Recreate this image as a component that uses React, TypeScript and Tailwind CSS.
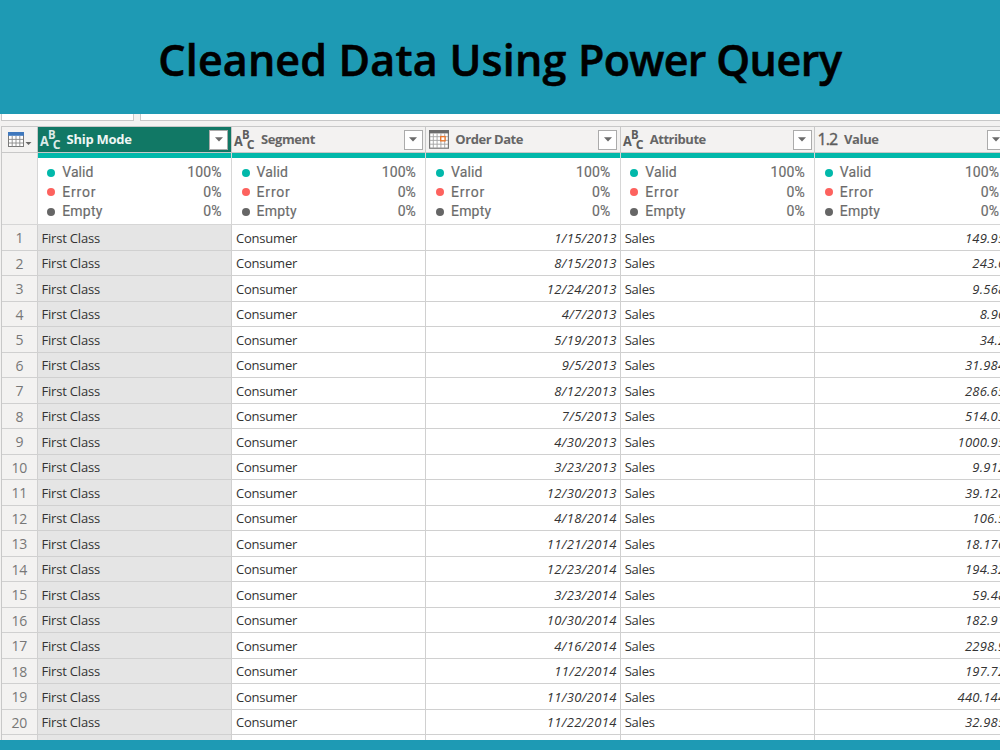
import React from 'react';

const dates = ['1/15/2013', '8/15/2013', '12/24/2013', '4/7/2013', '5/19/2013', '9/5/2013', '8/12/2013', '7/5/2013', '4/30/2013', '3/23/2013', '12/30/2013', '4/18/2014', '11/21/2014', '12/23/2014', '3/23/2014', '10/30/2014', '4/16/2014', '11/2/2014', '11/30/2014', '11/22/2014'];
const values = ['149.95', '243.6', '9.568', '8.96', '34.2', '31.984', '286.65', '514.03', '1000.95', '9.912', '39.128', '106.5', '18.176', '194.32', '59.48', '182.91', '2298.9', '197.72', '440.144', '32.985'];

type Kind = 'text' | 'date' | 'number';
const columns: { name: string; kind: Kind; tracking: string }[] = [
  { name: 'Ship Mode', kind: 'text', tracking: 'tracking-[-0.25px]' },
  { name: 'Segment', kind: 'text', tracking: 'tracking-[-0.4px]' },
  { name: 'Order Date', kind: 'date', tracking: 'tracking-[-0.45px]' },
  { name: 'Attribute', kind: 'text', tracking: 'tracking-[-0.45px]' },
  { name: 'Value', kind: 'number', tracking: 'tracking-[-0.4px]' },
];

const stats = [
  { label: 'Valid', pct: '100%', dot: 'bg-[#01b8aa]', tracking: 'tracking-[0.1px]' },
  { label: 'Error', pct: '0%', dot: 'bg-[#fd625e]', tracking: 'tracking-[0.8px]' },
  { label: 'Empty', pct: '0%', dot: 'bg-[#666666]', tracking: 'tracking-[0.2px]' },
];

const GRID = 'grid grid-cols-[35.5px_194.4px_194.4px_194.4px_194.4px_194.4px]';

function TypeIcon({ kind }: { kind: Kind }) {
  if (kind === 'date') {
    return (
      <svg width="20" height="19" viewBox="0 0 20 19" className="block">
        <rect x="0.6" y="0.6" width="18.8" height="17.6" fill="#fff" stroke="#777" strokeWidth="1.2" />
        <rect x="0" y="0" width="20" height="3.4" fill="#6b6b6b" />
        <path d="M4.3 3.4V18M8.1 3.4V18M11.9 3.4V18M15.7 3.4V18M1 6.7H19M1 10.4H19M1 14.2H19" stroke="#a3a3a3" strokeWidth="0.9" />
        <rect x="11.7" y="6.6" width="4.4" height="4.2" fill="#fff" stroke="#e8772e" strokeWidth="1.4" />
      </svg>
    );
  }
  if (kind === 'number') {
    return <span className="block w-5 text-[16px] leading-[19px] tracking-[-1px] [-webkit-text-stroke:0.4px_currentColor]">1.2</span>;
  }
  return (
    <svg width="21" height="20" viewBox="0 0 21 20" className="block overflow-visible" fill="currentColor" fontFamily="'Open Sans', sans-serif" fontWeight="700">
      <text x="0" y="15.8" fontSize="13.8" textLength="8.8" lengthAdjust="spacingAndGlyphs">A</text>
      <text x="7.9" y="9.3" fontSize="12" textLength="7.6" lengthAdjust="spacingAndGlyphs">B</text>
      <text x="12.8" y="19" fontSize="12.4" textLength="7.8" lengthAdjust="spacingAndGlyphs">C</text>
    </svg>
  );
}

function TableIcon() {
  return (
    <svg width="24" height="16" viewBox="0 0 24 16" className="block">
      <rect x="0.5" y="0.5" width="15" height="14" fill="#fff" stroke="#7a7a7a" />
      <rect x="0" y="0" width="16" height="3.8" fill="#3f78bd" />
      <path d="M4.2 4V14.5M8 4V14.5M11.8 4V14.5M1 7.4H15M1 11H15" stroke="#8a8a8a" strokeWidth="0.9" />
      <path d="M17.5 10H23.5L20.5 13Z" fill="#666" />
    </svg>
  );
}

function ColumnHeader({ column, selected }: { column: (typeof columns)[number]; selected: boolean }) {
  return (
    <div className={`flex h-[26px] items-center border-b border-r border-[#c8c8c8] pl-[2.5px] pr-[2.5px] ${selected ? 'bg-[#117865] text-[#dcebe8]' : 'bg-[#f3f2f1] text-[#5c5c5c]'}`}>
      <div className="w-[26.5px] shrink-0"><TypeIcon kind={column.kind} /></div>
      <span className={`flex-1 whitespace-nowrap pb-px text-[13px] font-bold leading-[18px] ${column.tracking} ${selected ? 'text-[#eef6f4]' : 'text-[#666]'}`}>{column.name}</span>
      <span className="flex h-5 w-[19px] shrink-0 items-center justify-center border border-[#ababab] bg-white">
        <svg width="8" height="5" viewBox="0 0 8 5"><path d="M0 0.3H8L4 4.5Z" fill="#6a6a6a" /></svg>
      </span>
    </div>
  );
}

function Quality() {
  return (
    <div className="h-[72px] border-b border-r border-[#d6d6d6] bg-white">
      <div className="h-[5px] bg-[#01b8aa]" />
      <div className="flex flex-col pl-[9.7px] pr-[9.3px] pt-[5px] font-['Roboto',sans-serif] text-[14px] text-[#6b6b6b] [-webkit-text-stroke:0.15px_#6b6b6b]">
        {stats.map((s) => (
          <div key={s.label} className="flex h-[19.6px] items-center">
            <span className={`h-2 w-2 rounded-full ${s.dot}`} />
            <span className={`ml-[7px] flex-1 ${s.tracking}`}>{s.label}</span>
            <span className="tracking-[0.1px]">{s.pct}</span>
          </div>
        ))}
      </div>
    </div>
  );
}

export default function App() {
  return (
    <div className="flex h-[750px] w-[1000px] flex-col overflow-hidden bg-[#1e9ab4] font-['Open_Sans',sans-serif]">
      <header className="flex h-[114px] shrink-0 justify-center pt-[31px]">
        <h1 className="whitespace-nowrap text-[43px] font-semibold leading-[58px] text-black [-webkit-text-stroke:0.6px_black]">
          <span className="tracking-[0.15px]">Cleaned </span>
          <span className="tracking-[0.25px]">Data Using </span>
          <span className="tracking-[-0.7px]">Power </span>
          <span className="tracking-[-0.4px]">Query</span>
        </h1>
      </header>
      <main className="h-[626px] shrink-0 overflow-hidden bg-[#f3f2f1] pl-px">
        <div className="flex h-[7px] gap-[6px]">
          <div className="w-[133px] shrink-0 border-x border-b border-[#c8c8c8] bg-white" />
          <div className="flex-1 border-b border-l border-[#c8c8c8] bg-white" />
        </div>
        <div className="mt-[5px] w-[1009px] border-l border-t border-[#c8c8c8]">
          <div className={GRID}>
            <div className="flex h-[26px] items-center border-b border-r border-[#c8c8c8] pl-[6px]"><TableIcon /></div>
            {columns.map((c, i) => <ColumnHeader key={c.name} column={c} selected={i === 0} />)}
          </div>
          <div className={GRID}>
            <div className="h-[72px] border-b border-r border-[#d6d6d6]" />
            {columns.map((c) => <Quality key={c.name} />)}
          </div>
          {[...dates, ''].map((date, i) => (
            <div key={i} className={`${GRID} grid-rows-[100%] text-[13px] tracking-[-0.2px] text-[#333] *:h-full *:border-b *:border-r *:border-[#d0d0d0] ${i % 2 ? 'h-[25px] leading-[25px]' : 'h-[26px] leading-[26px]'}`}>
              <div className="text-center text-[14px] tracking-[-0.3px] text-[#777]">{date && i + 1}</div>
              <div className="bg-[#e5e5e5] pl-1">{date && 'First Class'}</div>
              <div className="bg-white pl-1">{date && 'Consumer'}</div>
              <div className="bg-white pr-[3px] text-right italic tracking-[0.35px]">{date}</div>
              <div className="bg-white pl-1">{date && 'Sales'}</div>
              <div className="bg-white pr-[3px] text-right italic tracking-[0.25px]">{values[i]}</div>
            </div>
          ))}
        </div>
      </main>
    </div>
  );
}
